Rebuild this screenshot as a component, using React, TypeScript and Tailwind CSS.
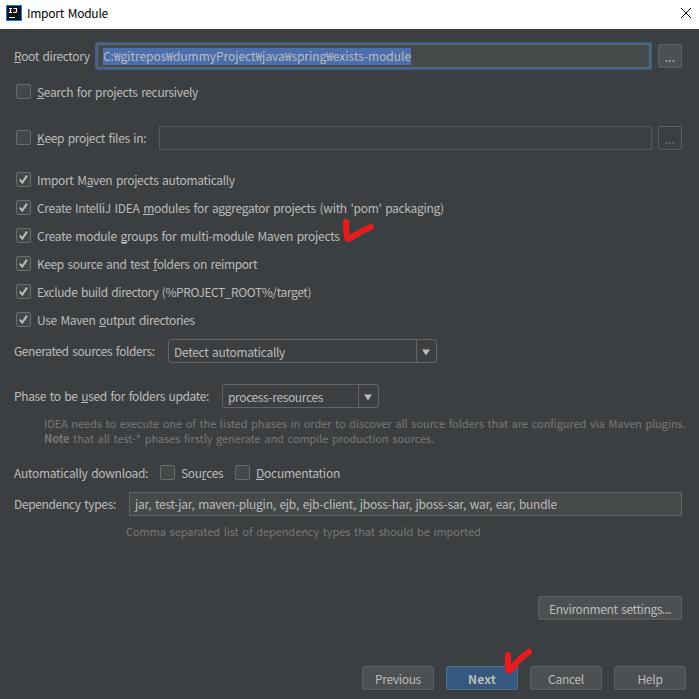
import type { ReactNode } from 'react';

function Label({ children, className = '' }: { children: ReactNode; className?: string }) {
  return <span className={`block whitespace-pre leading-[16px] [word-spacing:1.3px] ${className}`}>{children}</span>;
}

function U({ children }: { children: ReactNode }) {
  return <span className="border-b border-[#bbbbbb] inline-block h-[15px] leading-[16px]">{children}</span>;
}

function Box({ checked = false }: { checked?: boolean }) {
  return (
    <span className="flex size-[15px] shrink-0 items-center justify-center rounded-[2px] border border-[#6b6b6b] bg-[#43494a]">
      {checked && (
        <svg width="13" height="13" viewBox="0 0 13 13" fill="none" stroke="#bbbbbb" strokeWidth="2">
          <path d="M2.8 6.6 5.3 9.6 10 2.6" />
        </svg>
      )}
    </span>
  );
}

function Check({ children, checked, className = '' }: { children: ReactNode; checked?: boolean; className?: string }) {
  return (
    <div className="flex h-[15px] items-center gap-[6px] pl-[2px]">
      <Box checked={checked} />
      <Label className={className}>{children}</Label>
    </div>
  );
}

function Combo({ children, className = '', text = '' }: { children: ReactNode; className?: string; text?: string }) {
  return (
    <div className={`flex h-6 rounded-[3px] border border-[#646464] ${className}`}>
      <div className="flex flex-1 items-center pl-[5px] pt-[2px]">
        <Label className={text}>{children}</Label>
      </div>
      <div className="flex w-[20px] items-center justify-center border-l border-[#646464] pt-[2px] pr-px">
        <svg width="8" height="7" viewBox="0 0 8 7">
          <path d="M0 0.5H8L4 6.5Z" fill="#bbbbbb" />
        </svg>
      </div>
    </div>
  );
}

function Button({ children, className = 'border-[#5e6060] bg-[#4c5052]', text = '' }: { children: ReactNode; className?: string; text?: string }) {
  return (
    <div className={`flex h-6 shrink-0 items-center justify-center rounded-[2px] border pt-[2px] shadow-[0_1px_0_#353739] ${className}`}>
      <Label className={text}>{children}</Label>
    </div>
  );
}

export default function App() {
  return (
    <div className="relative flex h-[699px] w-[699px] flex-col overflow-hidden bg-[#3c3f41] font-['Noto_Sans_CJK_KR',sans-serif] text-[12px] text-[#bbbbbb]">
      <header className="flex h-[29px] shrink-0 items-center bg-white pl-[6px] pr-2 text-black">
        <svg width="16" height="16" viewBox="0 0 16 16" className="-mt-[3px]">
          <rect width="16" height="16" fill="#087cfa" />
          <rect x="1" y="1" width="14" height="14" fill="#111111" />
          <path d="M3 3.5H6M4.5 3V8M3 7.5H6M7.5 3.5H10.5V6.7L9.8 7.5H7.2" stroke="#fff" strokeWidth="1.2" fill="none" />
          <rect x="3" y="12" width="6" height="1" fill="#fff" />
        </svg>
        <Label className="ml-[5px] -mt-[3px] flex-1 tracking-[-0.26px]">Import Module</Label>
        <svg width="10" height="10" viewBox="0 0 10 10" stroke="#000" className="-mt-[3px]">
          <path d="M0 0L10 10M10 0L0 10" />
        </svg>
      </header>

      <main className="flex flex-1 flex-col px-[14px] pt-[13px]">
        <div className="flex h-7 items-center">
          <Label className="w-[81px] tracking-[-0.4px]"><U>R</U>oot directory</Label>
          <div className="h-7 w-[557px] rounded-[3px] border-2 border-[#3d6185]">
            <div className="flex h-6 items-center border border-[#5c6b75] bg-[#45494a] pl-[5px]">
              <span className="flex h-[17px] items-center bg-[#4b6eaf]">
                <Label className="tracking-[-0.04px]">C:₩gitrepos₩dummyProject₩java₩spring₩exists-module</Label>
              </span>
            </div>
          </div>
          <Button className="ml-[6px] w-6 border-[#5e6060] bg-[#4c5052]">...</Button>
        </div>

        <div className="mt-[14px]">
          <Check className="tracking-[-0.35px]"><U>S</U>earch for projects recursively</Check>
        </div>

        <div className="mt-[27px] flex h-6">
          <div className="w-[145px] pt-[4px]">
            <Check className="tracking-[-0.35px]"><U>K</U>eep project files in:</Check>
          </div>
          <div className="h-6 w-[493px] border border-[#555759]" />
          <Button className="ml-[6px] w-6 border-[#5e6060] text-[#777777]">...</Button>
        </div>

        <div className="mt-[22px] flex flex-col gap-[13px]">
          <Check checked className="tracking-[-0.33px]">Import M<U>a</U>ven projects automatically</Check>
          <Check checked className="tracking-[-0.31px]">Create IntelliJ IDEA <U>m</U>odules for aggregator projects (with 'pom' packaging)</Check>
          <Check checked className="tracking-[-0.27px]">Create module <U>g</U>roups for multi-module Maven projects</Check>
          <Check checked className="tracking-[-0.37px]">Keep source and test <U>f</U>olders on reimport</Check>
          <Check checked className="tracking-[-0.42px]">Exclude build directory (%PROJECT_ROOT%/target)</Check>
          <Check checked className="tracking-[-0.35px]">Use Maven <U>o</U>utput directories</Check>
        </div>

        <div className="mt-3 flex h-6 items-center">
          <Label className="w-[154px] tracking-[-0.4px]">Generated sources folders:</Label>
          <Combo className="w-[269px]" text="tracking-[-0.31px]">Detect automatically</Combo>
        </div>

        <div className="mt-[21px] flex h-6 items-center">
          <Label className="w-[208px] tracking-[-0.36px]">Phase to be <U>u</U>sed for folders update:</Label>
          <Combo className="w-[157px]" text="tracking-[-0.37px]">process-resources</Combo>
        </div>

        <div className="mt-[7px] flex flex-col pl-[30px] text-[11px] text-[#777777]">
          <Label className="h-[15px] tracking-[-0.07px]">IDEA needs to execute one of the listed phases in order to discover all source folders that are configured via Maven plugins.</Label>
          <Label className="h-[15px] tracking-[-0.06px]"><b>Note</b> that all test-* phases firstly generate and compile production sources.</Label>
        </div>

        <div className="mt-[20px] flex h-[15px] items-center">
          <Label className="w-[144px] tracking-[-0.3px]">Automatically download:</Label>
          <div className="w-[75px]">
            <Check className="tracking-[-0.3px]">Sou<U>r</U>ces</Check>
          </div>
          <Check className="tracking-[-0.25px]"><U>D</U>ocumentation</Check>
        </div>

        <div className="mt-3 flex h-6 items-center">
          <Label className="w-[115px] tracking-[-0.36px]">Dependency types:</Label>
          <div className="flex h-6 w-[553px] items-center border border-[#646464] bg-[#45494a] pl-[5px]">
            <Label className="tracking-[-0.27px]">jar, test-jar, maven-plugin, ejb, ejb-client, jboss-har, jboss-sar, war, ear, bundle</Label>
          </div>
        </div>

        <Label className="mt-[7px] pl-[112px] text-[11px] tracking-[-0.065px] text-[#777777]">Comma separated list of dependency types that should be imported</Label>

        <div className="mt-[57px] flex justify-end pr-[3px]">
          <Button className="w-36 border-[#5e6060] bg-[#4c5052]" text="tracking-[-0.37px]">Environment settings...</Button>
        </div>

        <div className="-mr-px mt-[46px] flex justify-end gap-3">
          <Button className="w-[72px] border-[#5e6060] bg-[#4c5052]" text="tracking-[-0.35px]">Previous</Button>
          <Button className="w-[72px] border-[#4c708c] bg-[#365880]" text="font-bold tracking-[0.2px]">Next</Button>
          <Button className="w-[72px] border-[#5e6060] bg-[#4c5052]" text="tracking-[-0.3px]">Cancel</Button>
          <Button className="w-[72px] border-[#5e6060] bg-[#4c5052]" text="tracking-[-0.25px]">Help</Button>
        </div>
      </main>

      <svg className="absolute left-[340px] top-[215px]" width="38" height="30" fill="none" stroke="#e81c1c" strokeWidth="6" strokeLinecap="round" strokeLinejoin="round">
        <path d="M6 7Q6 15 7 23Q8 25 12 22Q21 16 31 12" />
      </svg>
      <svg className="absolute left-[500px] top-[645px]" width="36" height="32" fill="none" stroke="#e81c1c" strokeWidth="6" strokeLinecap="round" strokeLinejoin="round">
        <path d="M8 10V24.5Q9 27 12 24Q17 15 29 7" />
      </svg>
    </div>
  );
}
